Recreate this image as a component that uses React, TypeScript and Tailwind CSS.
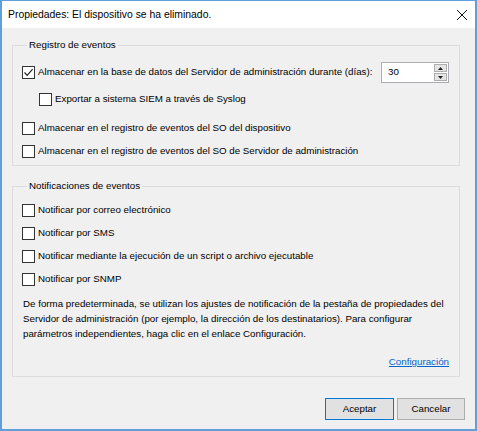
import React from "react";

const font = { fontFamily: '"Liberation Sans", Arial, sans-serif' };

function Check({ checked = false }: { checked?: boolean }) {
  return (
    <span className="w-[13px] h-[13px] border border-[#333333] bg-white flex items-center justify-center shrink-0">
      {checked && (
        <svg width="11" height="11" viewBox="0 0 11 11">
          <path d="M1.5 5.5 L4.2 8.3 L9.6 2.2" fill="none" stroke="#222" strokeWidth="1.2" />
        </svg>
      )}
    </span>
  );
}

function Row({ checked = false, label, className = "" }: { checked?: boolean; label: string; className?: string }) {
  return (
    <div className={"flex items-center h-[16px] gap-[3px] " + className}>
      <Check checked={checked} />
      <span className="whitespace-nowrap">{label}</span>
    </div>
  );
}

export default function App() {
  return (
    <div
      className="w-[477px] h-[431px] bg-[#f0f0f0] border-x-2 border-b-2 border-t border-[#5fa0dc] flex flex-col text-[9.75px] text-black"
      style={font}
    >
      <div className="h-[27px] bg-white flex items-center justify-between pl-[6px] pr-[6px] shrink-0">
        <span className="text-[10.4px]">Propiedades: El dispositivo se ha eliminado.</span>
        <svg width="12" height="12" viewBox="0 0 12 12" className="mr-[1px]">
          <path d="M1 1 L11 11 M11 1 L1 11" stroke="#111" strokeWidth="1" />
        </svg>
      </div>
      <div className="flex-1 flex flex-col pl-[10px] pr-[15px] pt-[11px]">
        <fieldset className="border border-[#dcdcdc] pl-[9px] pr-[10px] pb-[6px]">
          <legend className="px-[2px] ml-[5px] leading-[12px]">Registro de eventos</legend>
          <div className="flex items-center h-[21px] mt-[11px] justify-between">
            <div className="flex items-center gap-[3px]">
              <Check checked />
              <span className="whitespace-nowrap">Almacenar en la base de datos del Servidor de administración durante (días):</span>
            </div>
            <div className="flex h-[21px] w-[68px] border border-[#abadb3] bg-white">
              <span className="flex-1 pl-[6px] pt-[2px]">30</span>
              <div className="flex flex-col gap-[1px] p-[1px] w-[15px]">
                <div className="flex-1 bg-[#e5e5e5] border border-[#adadad] flex items-center justify-center">
                  <svg width="5" height="3" viewBox="0 0 5 3"><path d="M0 3 L2.5 0 L5 3Z" fill="#222" /></svg>
                </div>
                <div className="flex-1 bg-[#e5e5e5] border border-[#adadad] flex items-center justify-center">
                  <svg width="5" height="3" viewBox="0 0 5 3"><path d="M0 0 L2.5 3 L5 0Z" fill="#222" /></svg>
                </div>
              </div>
            </div>
          </div>
          <Row label="Exportar a sistema SIEM a través de Syslog" className="mt-[8px] ml-[17px]" />
          <Row label="Almacenar en el registro de eventos del SO del dispositivo" className="mt-[13px]" />
          <Row label="Almacenar en el registro de eventos del SO de Servidor de administración" className="mt-[7px]" />
        </fieldset>
        <fieldset className="border border-[#dcdcdc] pl-[9px] pr-[10px] pb-[7px] mt-[14px]">
          <legend className="px-[2px] ml-[5px] leading-[12px]">Notificaciones de eventos</legend>
          <div className="flex flex-col gap-[7px] mt-[10px]">
            <Row label="Notificar por correo electrónico" />
            <Row label="Notificar por SMS" />
            <Row label="Notificar mediante la ejecución de un script o archivo ejecutable" />
            <Row label="Notificar por SNMP" />
          </div>
          <p className="mt-[9px] leading-[15px] pl-[1px] whitespace-nowrap">
            De forma predeterminada, se utilizan los ajustes de notificación de la pestaña de propiedades del
            <br />
            Servidor de administración (por ejemplo, la dirección de los destinatarios). Para configurar
            <br />
            parámetros independientes, haga clic en el enlace Configuración.
          </p>
          <div className="flex justify-end mt-[13px]">
            <span className="text-[#0066cc] underline leading-[15px]">Configuración</span>
          </div>
        </fieldset>
        <div className="flex justify-end gap-[3px] mt-[21px] mr-[-5px]">
          <button className="w-[69px] h-[22px] bg-[#e1e1e1] border border-[#0078d7]">Aceptar</button>
          <button className="w-[68px] h-[22px] bg-[#e1e1e1] border border-[#adadad]">Cancelar</button>
        </div>
      </div>
    </div>
  );
}
